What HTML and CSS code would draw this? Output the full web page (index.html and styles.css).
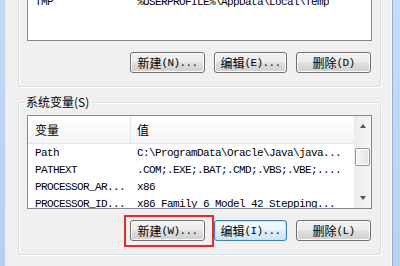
FILE: index.html
```html
<!DOCTYPE html>
<html lang="zh-CN">
<head>
    <meta charset="UTF-8">
    <title>环境变量</title>
    <link rel="stylesheet" href="styles.css">
</head>
<body>
    <div class="window">
        <div class="frame-left"></div>

        <div class="dialog">
            <!-- user variables: scrolled so only the last row shows -->
            <fieldset class="group group-user">
                <div class="listview listview-short">
                    <div class="lv-body">
                        <div class="lv-row">
                            <span class="col-name">TMP</span>
                            <span class="col-value">%USERPROFILE%\AppData\Local\Temp</span>
                        </div>
                    </div>
                </div>
                <div class="btn-row">
                    <button class="btn">新建<span class="key">(N)...</span></button>
                    <button class="btn btn-mid">编辑<span class="key">(E)...</span></button>
                    <button class="btn">删除<span class="key">(D)</span></button>
                </div>
            </fieldset>

            <fieldset class="group">
                <legend>系统变量(S)</legend>
                <div class="listview">
                    <div class="lv-body">
                        <div class="lv-head">
                            <span class="col-name">变量</span>
                            <span class="col-value">值</span>
                        </div>
                        <div class="lv-row">
                            <span class="col-name">Path</span>
                            <span class="col-value">C:\ProgramData\Oracle\Java\java...</span>
                        </div>
                        <div class="lv-row">
                            <span class="col-name">PATHEXT</span>
                            <span class="col-value">.COM;.EXE;.BAT;.CMD;.VBS;.VBE;....</span>
                        </div>
                        <div class="lv-row">
                            <span class="col-name">PROCESSOR_AR...</span>
                            <span class="col-value">x86</span>
                        </div>
                        <div class="lv-row">
                            <span class="col-name">PROCESSOR_ID...</span>
                            <span class="col-value">x86 Family 6 Model 42 Stepping...</span>
                        </div>
                    </div>
                    <div class="scrollbar">
                        <div class="sb-btn"><span class="arrow-up"></span></div>
                        <div class="sb-thumb"></div>
                        <div class="sb-track"></div>
                        <div class="sb-btn"><span class="arrow-down"></span></div>
                    </div>
                </div>
                <div class="btn-row">
                    <span class="mark">
                        <button class="btn">新建<span class="key">(W)...</span></button>
                    </span>
                    <button class="btn btn-mid btn-focus">编辑<span class="key">(I)...</span></button>
                    <button class="btn">删除<span class="key">(L)</span></button>
                </div>
            </fieldset>
        </div>

        <div class="frame-right"></div>
    </div>
</body>
</html>
```

FILE: styles.css
```css
body {
    margin: 0;
    background-color: #f0f0f0;
    font-family: "Noto Sans CJK SC", "Liberation Sans", sans-serif;
    font-size: 12px;
    color: #000;
    overflow: hidden;
}

.window {
    display: flex;
    height: 266px;
    overflow: hidden;
}

.frame-left {
    width: 5px;
    background: linear-gradient(#c3d9f1, #b6d0ec);
    border-right: 1px solid #e4edf7;
}

.frame-right {
    width: 7px;
    background: linear-gradient(#c6dcf3, #b9d2ee);
    border-left: 1px solid #8fb0d7;
}

.dialog {
    flex: 1;
    padding: 0 10px 0 12px;
    border-right: 1px solid #fcfcfc;
}

/* group boxes */

.group {
    margin: 0;
    padding: 5px 8px 13px;
    border: 1px solid #d5dfe5;
    border-radius: 3px;
    box-shadow: inset 1px 1px 0 #fff, 1px 1px 0 #fff;
    min-inline-size: 0;
}

.group-user {
    margin-top: -14px;
}

.group + .group {
    margin-top: 7px;
}

.group legend {
    padding: 0 2px;
    margin-left: -3px;
    line-height: 16px;
    font-size: 12px;
}

/* list view */

.listview {
    display: flex;
    height: 94px;
    box-sizing: border-box;
    border: 1px solid #828790;
    background-color: #fff;
}

.listview-short {
    height: 49px;
}

.lv-body {
    flex: 1;
    min-width: 0;
    overflow: hidden;
}

.lv-head {
    display: flex;
    height: 28px;
    box-sizing: border-box;
    background: linear-gradient(#ffffff, #f3f4f6);
    border-bottom: 1px solid #e3e5e8;
}

.lv-head span {
    display: flex;
    align-items: center;
    font-size: 12px;
}

.col-name {
    width: 103px;
    flex: none;
    box-sizing: border-box;
    padding-left: 7px;
    overflow: hidden;
}

.col-value {
    padding-left: 6px;
    overflow: hidden;
}

.lv-head .col-name {
    border-right: 1px solid #e3e5e8;
}

.lv-row {
    display: flex;
    align-items: center;
    height: 17px;
    font-family: "Liberation Mono", monospace;
    font-size: 11px;
    letter-spacing: -0.6px;
    white-space: nowrap;
}

/* scrollbar */

.scrollbar {
    width: 17px;
    flex: none;
    display: flex;
    flex-direction: column;
    background: linear-gradient(90deg, #ebebec, #f6f6f6);
}

.sb-btn {
    height: 20px;
    display: flex;
    align-items: center;
    justify-content: center;
}

.arrow-up {
    border-left: 3px solid transparent;
    border-right: 3px solid transparent;
    border-bottom: 4px solid #4b5466;
}

.arrow-down {
    border-left: 3px solid transparent;
    border-right: 3px solid transparent;
    border-top: 4px solid #4b5466;
}

.sb-thumb {
    height: 18px;
    box-sizing: border-box;
    margin: 12px 1px 0;
    border: 1px solid #979797;
    border-radius: 2px;
    background: linear-gradient(90deg, #f7f7f7, #e2e2e2);
    box-shadow: inset 0 0 0 1px #fbfbfb;
}

.sb-track {
    flex: 1;
}

/* buttons */

.btn-row {
    display: flex;
    justify-content: flex-end;
    gap: 9px;
    margin-top: 11px;
    padding-right: 1px;
}

.btn {
    width: 75px;
    height: 21px;
    box-sizing: border-box;
    padding: 0;
    display: flex;
    align-items: center;
    justify-content: center;
    border: 1px solid #707070;
    border-radius: 3px;
    background: linear-gradient(#f3f3f3 0%, #ebebeb 48%, #dedede 52%, #d0d0d0 100%);
    box-shadow: inset 0 0 0 1px #fcfcfc;
    font-family: "Noto Sans CJK SC", sans-serif;
    font-size: 12px;
    color: #000;
}

.btn-mid {
    width: 73px;
}

.btn-focus {
    border-color: #3c7fb1;
    box-shadow: inset 0 0 0 1px #bfe7fb;
    background: linear-gradient(#f4fafd 0%, #eaf5fc 48%, #dcedf8 52%, #cfe6f5 100%);
}

.key {
    font-family: "Liberation Mono", monospace;
    font-size: 11px;
    letter-spacing: -0.6px;
}

.mark {
    position: relative;
    display: flex;
}

.mark::after {
    content: "";
    position: absolute;
    left: -6px;
    top: -5px;
    right: -9px;
    bottom: -6px;
    border: 2px solid #e8282c;
}
```
